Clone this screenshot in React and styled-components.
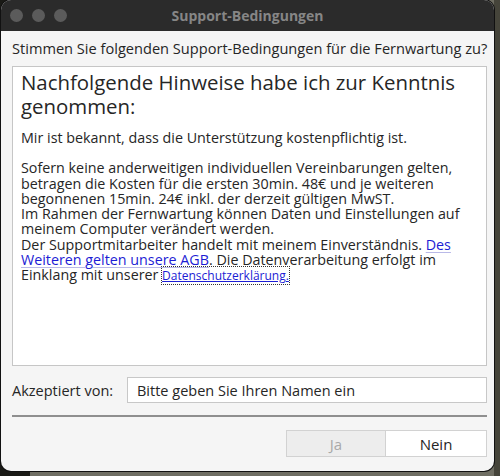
import React from 'react';
import styled, { createGlobalStyle } from 'styled-components';

const GlobalStyle = createGlobalStyle`
  html, body {
    margin: 0;
    padding: 0;
  }
  body {
    width: 500px;
    height: 476px;
    overflow: hidden;
    background: linear-gradient(to right, #1a1a16 0 30px, #6f6e63 30px 100%);
    font-family: "Open Sans", "Liberation Sans", sans-serif;
  }
  #root {
    height: 476px;
    background: linear-gradient(to right, transparent 0 494px, #45443a 494px);
  }
`;

const Window = styled.div`
  width: 493px;
  height: 471px;
  margin-left: 1px;
  border-radius: 10px;
  overflow: hidden;
  background: #f5f5f5;
  display: flex;
  flex-direction: column;
  box-shadow: 0 0 0 1px #111;
`;

const TitleBar = styled.div`
  height: 31px;
  background: #2b2b2b;
  display: flex;
  align-items: center;
  position: relative;
  padding-left: 9px;
  gap: 9px;
  flex-shrink: 0;
`;

const Light = styled.span`
  width: 13px;
  height: 13px;
  border-radius: 50%;
  background: #5b5b5b;
`;

const Title = styled.div`
  position: absolute;
  left: 0;
  right: 0;
  text-align: center;
  color: #868686;
  font-weight: 700;
  font-size: 14px;
  pointer-events: none;
`;

const Body = styled.div`
  flex: 1;
  display: flex;
  flex-direction: column;
  padding: 6px 7px 0 11px;
`;

const Question = styled.div`
  font-size: 14.6px;
  color: #262626;
  height: 29px;
  line-height: 22px;
  white-space: nowrap;
`;

const TextBox = styled.div`
  height: 300px;
  background: #fff;
  border: 1px solid #c6c6c6;
  padding: 0 8px;
  color: #262626;
  font-size: 14.3px;
  line-height: 15.3px;
  box-sizing: border-box;
`;

const Heading = styled.h1`
  margin: 0;
  padding-top: 3px;
  font-weight: 400;
  font-size: 20.4px;
  line-height: 24px;
  color: #262626;
`;

const Para = styled.p`
  margin: ${p => p.$top}px 0 0;
`;

const Link = styled.a`
  color: #1c1cd4;
  text-decoration: underline;
  text-decoration-color: #b9b9e8;
  text-underline-offset: 2px;
`;

const FocusLink = styled.a`
  color: #1c1cd4;
  font-size: 12px;
  text-decoration: underline;
  text-underline-offset: 1px;
  outline: 1px dotted #333;
  outline-offset: 0;
`;

const FormRow = styled.div`
  display: flex;
  align-items: center;
  margin-top: 11px;
  gap: 11px;
`;

const Label = styled.label`
  font-size: 14.5px;
  color: #262626;
  width: 104px;
  white-space: nowrap;
`;

const Input = styled.div`
  flex: 1;
  height: 26px;
  box-sizing: border-box;
  border: 1px solid #c8c8c8;
  background: #fff;
  padding-left: 9px;
  font-size: 14.5px;
  color: #262626;
  display: flex;
  align-items: center;
  white-space: nowrap;
`;

const Separator = styled.div`
  height: 2px;
  background: #8f8f8f;
  margin-top: 12px;
`;

const ButtonRow = styled.div`
  display: flex;
  justify-content: flex-end;
  margin-top: 13px;
`;

const Button = styled.button`
  width: ${p => (p.$disabled ? 100 : 101)}px;
  height: 27px;
  box-sizing: border-box;
  border: 1px solid #d2d2d2;
  border-left-width: ${p => (p.$disabled ? 1 : 0)}px;
  background: ${p => (p.$disabled ? '#ededed' : '#fff')};
  color: ${p => (p.$disabled ? '#a9a9a9' : '#262626')};
  font-family: inherit;
  font-size: 15px;
  padding: 0;
`;

export default function App() {
  return (
    <>
      <GlobalStyle />
      <Window>
        <TitleBar>
          <Light />
          <Light />
          <Light />
          <Title>Support-Bedingungen</Title>
        </TitleBar>
        <Body>
          <Question>Stimmen Sie folgenden Support-Bedingungen für die Fernwartung zu?</Question>
          <TextBox>
            <Heading>Nachfolgende Hinweise habe ich zur Kenntnis genommen:</Heading>
            <Para $top={12}>Mir ist bekannt, dass die Unterstützung kostenpflichtig ist.</Para>
            <Para $top={15}>
              Sofern keine anderweitigen individuellen Vereinbarungen gelten, betragen die Kosten
              für die ersten 30min. 48€ und je weiteren begonnenen 15min. 24€ inkl. der derzeit
              gültigen MwST.
              <br />
              Im Rahmen der Fernwartung können Daten und Einstellungen auf meinem Computer
              verändert werden.
              <br />
              Der Supportmitarbeiter handelt mit meinem Einverständnis.{' '}
              <Link>Des Weiteren gelten unsere AGB</Link>. Die Datenverarbeitung erfolgt im
              Einklang mit unserer <FocusLink>Datenschutzerklärung.</FocusLink>
            </Para>
          </TextBox>
          <FormRow>
            <Label>Akzeptiert von:</Label>
            <Input>Bitte geben Sie Ihren Namen ein</Input>
          </FormRow>
          <Separator />
          <ButtonRow>
            <Button $disabled disabled>Ja</Button>
            <Button>Nein</Button>
          </ButtonRow>
        </Body>
      </Window>
    </>
  );
}
